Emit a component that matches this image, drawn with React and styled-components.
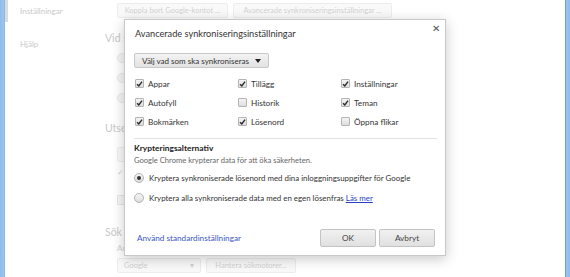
import React from "react";
import styled, { createGlobalStyle } from "styled-components";

const GlobalStyle = createGlobalStyle`
  html, body { margin: 0; padding: 0; background: #fff; }
  body { font-family: Lato, "Open Sans", sans-serif; color: #333; }
`;

const Window = styled.div`
  position: relative;
  display: flex;
  width: 570px;
  height: 277px;
  overflow: hidden;
  background: #fff;
`;

const Frame = styled.div`
  width: 5px;
  flex-shrink: 0;
  background: ${(p) =>
    p.right
      ? "linear-gradient(to right, #6f9fd2 0, #6f9fd2 1px, #9cc6f0 1px, #8fbbe8 100%)"
      : "linear-gradient(to right, #8fbbe8 0, #9cc6f0 80%, #7aa9d9 100%)"};
`;

const Page = styled.div`
  flex: 1;
  display: flex;
  min-width: 0;
`;

const Sidebar = styled.nav`
  width: 100px;
  flex-shrink: 0;
  display: flex;
  flex-direction: column;
`;

const NavItem = styled.div`
  height: ${(p) => p.h}px;
  box-sizing: border-box;
  display: flex;
  align-items: ${(p) => (p.top ? "flex-start" : "center")};
  padding: ${(p) => (p.top ? 17 : 0)}px 0 0 12px;
  font-size: 8px;
  color: #c9c9c9;
  border-left: 3px solid ${(p) => (p.active ? "#dcdcdc" : "transparent")};
`;

const Content = styled.div`
  flex: 1;
  display: flex;
  flex-direction: column;
  padding-top: 3px;
`;

/* the part of the settings page that the dialog covers: only its left strip shows */
const Covered = styled.div`
  width: 19px;
  overflow: hidden;
  white-space: nowrap;
  display: flex;
  flex-direction: column;
`;

const BgRow = styled.div`
  display: flex;
  gap: 5px;
  padding-left: 12px;
  margin-top: ${(p) => p.mt || 0}px;
  align-items: center;
`;

const BgButton = styled.div`
  height: 15px;
  width: ${(p) => p.w}px;
  flex-shrink: 0;
  box-sizing: border-box;
  border: 1px solid #ededed;
  background: #f9f9f9;
  border-radius: 2px;
  font-size: 7.5px;
  color: #d2d2d2;
  display: flex;
  align-items: center;
  justify-content: ${(p) => (p.between ? "space-between" : "center")};
  padding: 0 6px;
  white-space: nowrap;
  overflow: hidden;
`;

const BgHeading = styled.div`
  font-size: 10.5px;
  color: #c8c8c8;
  margin-top: ${(p) => p.mt}px;
  height: 14px;
  line-height: 14px;
`;

const BgText = styled.div`
  font-size: 8px;
  color: #d2d2d2;
  padding-left: 12px;
  margin-top: ${(p) => p.mt}px;
  height: 12px;
  line-height: 12px;
  display: flex;
  align-items: center;
  gap: 4px;
`;

const BgCircle = styled.span`
  width: 8px;
  height: 8px;
  flex-shrink: 0;
  border-radius: ${(p) => (p.square ? "1px" : "50%")};
  border: 1px solid #e6e6e6;
  background: #f6f6f6;
`;

const Dialog = styled.div`
  position: absolute;
  left: 124px;
  top: 19px;
  width: 322px;
  height: 237px;
  box-sizing: border-box;
  background: #fff;
  border: 1px solid #c8c8c8;
  box-shadow: 0 3px 12px rgba(0, 0, 0, 0.22);
  display: flex;
  flex-direction: column;
`;

const Header = styled.div`
  height: 26px;
  display: flex;
  align-items: center;
  justify-content: space-between;
  padding: 0 5px 0 10px;
`;

const Title = styled.div`
  font-size: 9.2px;
  color: #333;
`;

const Close = styled.div`
  font-size: 10px;
  color: #555;
  margin-top: -10px;
  line-height: 1;
`;

const Body = styled.div`
  flex: 1;
  padding: 0 8px 0 9px;
  display: flex;
  flex-direction: column;
`;

const Select = styled.div`
  margin-top: 7px;
  align-self: flex-start;
  height: 15px;
  box-sizing: border-box;
  border: 1px solid #c8c8c8;
  border-radius: 2px;
  background: linear-gradient(#f3f3f3, #e2e2e2);
  display: flex;
  align-items: center;
  gap: 6px;
  padding: 0 7px;
  font-size: 8px;
  color: #333;
`;

const Arrow = styled.span`
  width: 0;
  height: 0;
  border-left: 3px solid transparent;
  border-right: 3px solid transparent;
  border-top: 4px solid #222;
`;

const Grid = styled.div`
  margin-top: 6px;
  display: grid;
  grid-template-columns: 103px 103px 1fr;
  grid-auto-rows: 19px;
  padding-left: 1px;
`;

const Option = styled.label`
  display: flex;
  align-items: center;
  gap: 4px;
  font-size: 8.2px;
  color: #333;
`;

const Box = styled.span`
  width: 9px;
  height: 9px;
  box-sizing: border-box;
  border: 1px solid #b4b4b4;
  border-radius: 1px;
  background: linear-gradient(#f4f4f4, #dedede);
  display: flex;
  align-items: center;
  justify-content: center;
`;

const Separator = styled.div`
  height: 1px;
  background: #e2e2e2;
  margin-top: 7px;
`;

const SectionTitle = styled.div`
  font-size: 8.4px;
  font-weight: bold;
  color: #222;
  margin-top: 3px;
  height: 12px;
  line-height: 12px;
`;

const Desc = styled.div`
  font-size: 7.6px;
  color: #666;
  height: 13px;
  line-height: 13px;
`;

const RadioRow = styled.div`
  display: flex;
  align-items: center;
  gap: 5px;
  font-size: 7.9px;
  color: #333;
  height: 20px;
  white-space: nowrap;
  margin-top: ${(p) => p.mt || 0}px;
`;

const Radio = styled.span`
  width: 10px;
  height: 10px;
  box-sizing: border-box;
  border-radius: 50%;
  border: 1px solid #b4b4b4;
  background: linear-gradient(#f6f6f6, #dcdcdc);
  display: flex;
  align-items: center;
  justify-content: center;
  &::after {
    content: "";
    width: 4px;
    height: 4px;
    border-radius: 50%;
    background: ${(p) => (p.checked ? "#333" : "transparent")};
  }
`;

const Link = styled.a`
  color: ${(p) => (p.underline ? "#2a3fbf" : "#3a57c4")};
  text-decoration: ${(p) => (p.underline ? "underline" : "none")};
  cursor: pointer;
`;

const Footer = styled.div`
  height: 26px;
  box-sizing: border-box;
  display: flex;
  align-items: center;
  padding: 0 10px 8px 12px;
  font-size: 8.2px;
`;

const Spacer = styled.div`
  flex: 1;
`;

const Button = styled.button`
  width: 56px;
  height: 18px;
  margin-left: 3px;
  box-sizing: border-box;
  border: 1px solid #c4c4c4;
  border-radius: 2px;
  background: linear-gradient(#f1f1f1, #e0e0e0);
  font-family: inherit;
  font-size: 8.2px;
  color: #444;
  padding: 0;
`;

function Check({ checked }) {
  return (
    <Box>
      {checked && (
        <svg width="8" height="8" viewBox="0 0 8 8">
          <path d="M1.2 4.2 L3.2 6.3 L6.9 1.2" fill="none" stroke="#2a2a2a" strokeWidth="1.6" />
        </svg>
      )}
    </Box>
  );
}

const options = [
  ["Appar", true],
  ["Tillägg", true],
  ["Inställningar", true],
  ["Autofyll", true],
  ["Historik", false],
  ["Teman", true],
  ["Bokmärken", true],
  ["Lösenord", true],
  ["Öppna flikar", false],
];

export default function App() {
  return (
    <Window>
      <GlobalStyle />
      <Frame />
      <Page>
        <Sidebar>
          <NavItem h={22} active>Inställningar</NavItem>
          <NavItem h={46} top>Hjälp</NavItem>
        </Sidebar>
        <Content>
          <BgRow>
            <BgButton w={111}>Koppla bort Google-kontot ...</BgButton>
            <BgButton w={159}>Avancerade synkroniseringsinställningar ...</BgButton>
          </BgRow>
          <Covered>
            <BgHeading mt={13}>Vid start</BgHeading>
            <BgText mt={7}><BgCircle /></BgText>
            <BgText mt={8}><BgCircle /></BgText>
            <BgText mt={8}><BgCircle /></BgText>
            <BgHeading mt={17}>Utseende</BgHeading>
            <BgRow mt={12}>
              <BgButton w={80} />
            </BgRow>
            <BgText mt={4}>✓</BgText>
            <BgText mt={16}><BgCircle square /></BgText>
            <BgHeading mt={19}>Sök</BgHeading>
            <BgText mt={3}>Ange</BgText>
          </Covered>
          <BgRow mt={4}>
            <BgButton w={84} between>
              <span>Google</span>
              <span>▾</span>
            </BgButton>
            <BgButton w={90}>Hantera sökmotorer...</BgButton>
          </BgRow>
        </Content>
      </Page>
      <Frame right />

      <Dialog>
        <Header>
          <Title>Avancerade synkroniseringsinställningar</Title>
          <Close>✕</Close>
        </Header>
        <Body>
          <Select>
            Välj vad som ska synkroniseras
            <Arrow />
          </Select>
          <Grid>
            {options.map(([label, checked]) => (
              <Option key={label}>
                <Check checked={checked} />
                {label}
              </Option>
            ))}
          </Grid>
          <Separator />
          <SectionTitle>Krypteringsalternativ</SectionTitle>
          <Desc>Google Chrome krypterar data för att öka säkerheten.</Desc>
          <RadioRow mt={1}>
            <Radio checked />
            Kryptera synkroniserade lösenord med dina inloggningsuppgifter för Google
          </RadioRow>
          <RadioRow>
            <Radio />
            <span>
              Kryptera alla synkroniserade data med en egen lösenfras{" "}
              <Link underline>Läs mer</Link>
            </span>
          </RadioRow>
        </Body>
        <Footer>
          <Link>Använd standardinställningar</Link>
          <Spacer />
          <Button>OK</Button>
          <Button>Avbryt</Button>
        </Footer>
      </Dialog>
    </Window>
  );
}
